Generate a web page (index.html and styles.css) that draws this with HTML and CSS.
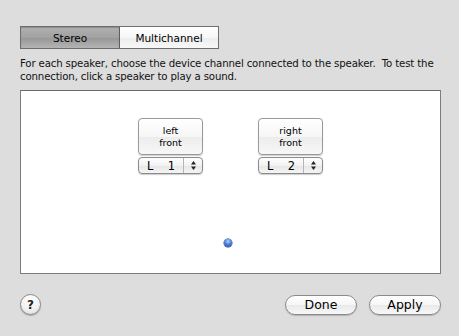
FILE: index.html
```html
<!DOCTYPE html>
<html>
<head>
<meta charset="utf-8">
<link rel="stylesheet" href="styles.css">
</head>
<body>
<div class="window">
  <div class="segmented">
    <div class="seg seg-on">Stereo</div>
    <div class="seg">Multichannel</div>
  </div>
  <p class="info">For each speaker, choose the device channel connected to the speaker.&nbsp; To test the connection, click a speaker to play a sound.</p>
  <div class="canvas">
    <div class="speakers">
      <div class="speaker">
        <div class="spk-btn">left<br>front</div>
        <div class="popup"><span class="pl">L</span><span class="pn">1</span><span class="step"><svg width="7" height="11" viewBox="0 0 7 11"><path d="M3.5 1 L6 4.5 H1 Z M3.5 10 L6 6.5 H1 Z" fill="#222"/></svg></span></div>
      </div>
      <div class="speaker">
        <div class="spk-btn">right<br>front</div>
        <div class="popup"><span class="pl">L</span><span class="pn">2</span><span class="step"><svg width="7" height="11" viewBox="0 0 7 11"><path d="M3.5 1 L6 4.5 H1 Z M3.5 10 L6 6.5 H1 Z" fill="#222"/></svg></span></div>
      </div>
    </div>
    <div class="dot"></div>
  </div>
  <div class="footer">
    <div class="help">?</div>
    <div class="buttons">
      <div class="pill">Done</div>
      <div class="pill">Apply</div>
    </div>
  </div>
</div>
</body>
</html>
```
FILE: styles.css
```css
html, body {
  margin: 0;
  padding: 0;
  background: #dddddd;
}
body {
  width: 459px;
  height: 336px;
  overflow: hidden;
  font-family: "DejaVu Sans", "Lucida Grande", sans-serif;
  font-size: 11px;
  color: #000;
}
.window {
  padding: 26px 18px 0 20px;
  display: flex;
  flex-direction: column;
}
.segmented {
  display: flex;
  width: 199px;
  height: 23px;
  box-sizing: border-box;
  border: 1px solid #6e6e6e;
}
.seg {
  flex: 1;
  display: flex;
  align-items: center;
  justify-content: center;
  font-size: 10.5px;
  background: linear-gradient(#ffffff, #f6f6f6 50%, #ececec 51%, #f8f8f8);
}
.seg-on {
  background: linear-gradient(#b0b0b0, #a2a2a2 50%, #969696 51%, #b4b4b4);
  border-right: 1px solid #5e5e5e;
  box-shadow: inset 0 1px 1px rgba(0,0,0,0.2);
}
.info {
  margin: 8px 0 0 0;
  line-height: 13px;
  font-size: 10.2px;
  letter-spacing: -0.15px;
  color: #111;
}
.canvas {
  margin-top: 7px;
  width: 421px;
  height: 184px;
  box-sizing: border-box;
  background: #fff;
  border: 1px solid #7c7c7c;
  border-top-color: #6a6a6a;
  position: relative;
  display: flex;
  flex-direction: column;
  align-items: center;
}
.speakers {
  display: flex;
  gap: 55px;
  margin-top: 27px;
}
.speaker {
  display: flex;
  flex-direction: column;
  gap: 2px;
}
.spk-btn {
  width: 65px;
  height: 37px;
  box-sizing: border-box;
  border: 1px solid #9a9a9a;
  border-radius: 4px;
  background: linear-gradient(#ffffff, #f6f6f6 50%, #ececec 51%, #f7f7f7);
  box-shadow: 0 1px 1px rgba(0,0,0,0.2);
  display: flex;
  align-items: center;
  justify-content: center;
  text-align: center;
  font-size: 9.5px;
  line-height: 12px;
}
.popup {
  width: 65px;
  height: 17px;
  box-sizing: border-box;
  border: 1px solid #8a8a8a;
  border-radius: 4px;
  background: linear-gradient(#ffffff, #f2f2f2 50%, #e6e6e6 51%, #f5f5f5);
  box-shadow: 0 1px 1px rgba(0,0,0,0.2);
  display: flex;
  align-items: center;
  font-size: 11.5px;
}
.pl {
  margin-left: 8px;
  width: 21px;
}
.pn {
  width: 16px;
}
.step {
  margin-left: auto;
  width: 18px;
  height: 15px;
  border-left: 1px solid #b5b5b5;
  display: flex;
  align-items: center;
  justify-content: center;
}
.dot {
  position: absolute;
  left: 203px;
  top: 148px;
  width: 8px;
  height: 8px;
  border-radius: 50%;
  background: radial-gradient(circle at 50% 30%, #b7d3ff 0, #4a7fe0 45%, #1c3f9c 100%);
  box-shadow: 0 0 0 0.5px #203c7a;
}
.footer {
  display: flex;
  align-items: center;
  justify-content: space-between;
  margin-top: 20px;
}
.help {
  width: 21px;
  height: 21px;
  box-sizing: border-box;
  border-radius: 50%;
  border: 1px solid #8a8a8a;
  background: radial-gradient(circle at 50% 25%, #ffffff 0, #f2f2f2 55%, #d8d8d8 100%);
  box-shadow: 0 1px 1px rgba(0,0,0,0.25);
  display: flex;
  align-items: center;
  justify-content: center;
  font-weight: bold;
  font-size: 12px;
  color: #222;
}
.buttons {
  display: flex;
  gap: 12px;
}
.pill {
  width: 72px;
  height: 20px;
  box-sizing: border-box;
  border: 1px solid #8a8a8a;
  border-radius: 10px;
  background: linear-gradient(#ffffff, #f6f6f6 50%, #e9e9e9 51%, #f8f8f8);
  box-shadow: 0 1px 1px rgba(0,0,0,0.2);
  display: flex;
  align-items: center;
  justify-content: center;
  font-size: 12.5px;
}
```
